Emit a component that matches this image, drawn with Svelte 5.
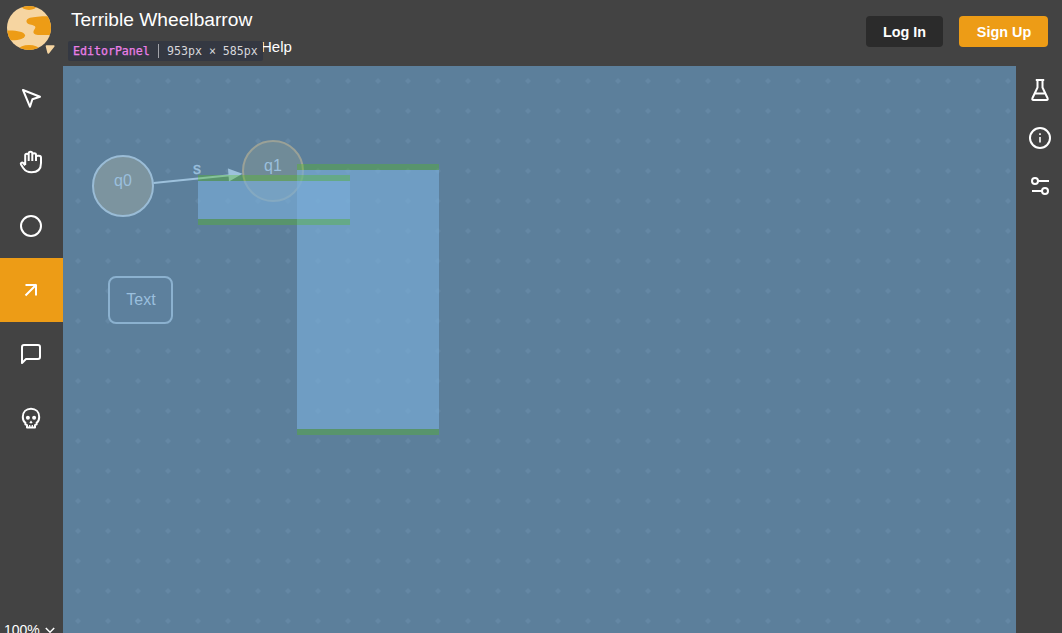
<script>
  const tools = ['cursor', 'hand', 'state', 'transition', 'comment', 'skull'];
  let active = $state('transition');
</script>

<div class="editor">
  <header>
    <svg class="logo" width="50" height="50" viewBox="0 0 50 50">
      <defs><clipPath id="moon"><circle cx="22" cy="22" r="22" /></clipPath></defs>
      <circle cx="22" cy="22" r="22" fill="#f6d5a1" />
      <g clip-path="url(#moon)" fill="#ed9c16">
        <ellipse cx="22" cy="0" rx="7.5" ry="3.900" />
        <path d="M46 10.300C36 10 28 10.500 23 11.800c-5 1.700-4.500 5.500 0 6.800 5 1 6.500 2 4.500 4.700-3 4 .5 5.700 6.500 5.700h12z" />
        <path d="M-1 24.500C8 24 18 25.500 18 29.200 18 33.200 10 34.800 1 34z" />
        <ellipse cx="22" cy="43" rx="10" ry="4" />
      </g>
      <path d="M39.300 39.300h7.600q1.200.2.600 1.100l-5.500 7q-1.200 1-1.600-.4l-1.700-6.700q0-1 .6-1z" fill="#f6d5a1" />
    </svg>
    <div class="heading">
      <h1>Terrible Wheelbarrow</h1>
      <nav><span>Help</span>
        <div class="tooltip"><b>EditorPanel</b><i></i><span>953px × 585px</span></div>
      </nav>
    </div>
    <div class="account">
      <button class="login">Log In</button>
      <button class="signup">Sign Up</button>
    </div>
  </header>
  <div class="workspace">
    <aside class="tools">
      {#each tools as tool}
        <button aria-label={tool} class:active={active === tool} onclick={() => (active = tool)}>
          <svg class="icon" width="24" height="24" viewBox="0 0 24 24">
            {#if tool === 'cursor'}
              <path d="M4 4l17 6.800-7.600 2.400L11 20.800z" />
            {:else if tool === 'hand'}
              <path d="M6.200 15V5.300q0-1.500 1.700-1.500t1.800 1.500V11M9.700 10V3.500Q9.700 1.800 11.500 1.800t1.800 1.700V11M13.300 10V4.800q0-1.500 1.800-1.500T17 4.800V11M17 10V7q0-1.300 1.800-1.300H20q2 0 2 2V13c0 6-3.500 9.300-9.500 9.300-4 0-6.500-1.600-8.300-4.300L2 14.500c-.8-1.600 1-2.600 2.200-1.500l2 2.300" />
            {:else if tool === 'state'}
              <circle cx="12" cy="12" r="10" />
            {:else if tool === 'transition'}
              <path d="M6.500 17.500L17.500 6.500M6.500 7H17v10.500" />
            {:else if tool === 'comment'}
              <path d="M3 21V5q0-2 2-2h14q2 0 2 2v10q0 2-2 2H7z" />
            {:else}
              <path d="M8 21.500v-2.400l-1.600-.7v-1.600C4.500 15.500 3.800 13.500 3.800 11c0-5 3.400-8.200 8.200-8.200s8.200 3.200 8.200 8.200c0 2.500-.7 4.500-2.600 5.800v1.600l-1.600.7v2.400z" />
              <path class="teeth" d="M10.700 19v2.500M13.300 19v2.500" />
              <circle class="solid" cx="8.900" cy="11.800" r="2" />
              <circle class="solid" cx="15.100" cy="11.800" r="2" />
              <path class="solid" d="M12 14.400l1.600 2.400-1.600.8-1.600-.8z" />
            {/if}
          </svg>
        </button>
      {/each}
      <div class="zoom">100%<svg width="10" height="7" viewBox="0 0 10 7"><path d="M.8 1L5 5.200 9.200 1" /></svg></div>
    </aside>
    <main>
      <svg class="graph" width="953" height="567" viewBox="63 66 953 567">
        <defs>
          <pattern id="grid" x="63" y="66" width="30" height="30" patternUnits="userSpaceOnUse">
            <path d="M15 12l3 3-3 3-3-3z" fill="#6487a4" />
          </pattern>
        </defs>
        <rect x="63" y="66" width="953" height="567" fill="url(#grid)" />
        <circle cx="123" cy="186" r="30" fill="#7c949f" stroke="#9abcd6" stroke-width="2" />
        <circle cx="273" cy="171" r="30" fill="#708b98" stroke="#9aa197" stroke-width="2" />
        <path d="M153.500 183L230 175.200" stroke="#9dc1dc" stroke-width="2" />
        <path d="M228 168.500L242.500 173.800 229 181.500z" fill="#9dc1dc" />
        <text x="123" y="186">q0</text>
        <text x="273" y="171">q1</text>
        <text class="label" x="197" y="174">s</text>
        <rect x="109" y="277" width="63" height="46" rx="7" fill="#5d809d" stroke="#8bb1cf" stroke-width="2" />
        <text x="141" y="305">Text</text>
        <g class="box"><path d="M297 170h142v259H297z" /><path class="edge" d="M297 164h142v6H297zM297 429h142v6H297z" /></g>
        <g class="box"><path d="M198 181h152v38H198z" /><path class="edge" d="M198 175h152v6H198zM198 219h152v6H198z" /></g>
      </svg>
    </main>
    <aside class="panels">
      <svg class="icon" width="24" height="24" viewBox="0 0 24 24"><path d="M7.800 2h8.400M9.500 2v7.500L4.500 20q-.8 2 1 2h13q1.800 0 1-2L14.500 9.500V2M7 15.500h10" /></svg>
      <svg class="icon" width="24" height="24" viewBox="0 0 24 24"><circle cx="12" cy="12" r="10" /><path class="fine" d="M12 11v5.500M12 7.200v1.800" /></svg>
      <svg class="icon" width="24" height="24" viewBox="0 0 24 24"><circle cx="7" cy="7" r="3" /><path d="M10 7H21M4 17h10" /><circle cx="17" cy="17" r="3" /></svg>
    </aside>
  </div>
</div>

<style>
  .editor { height: 633px; overflow: hidden; background: #434343; color: #fff; font-family: "Liberation Sans", Arial, sans-serif; display: flex; flex-direction: column; }
  header { height: 66px; flex: none; display: flex; box-sizing: border-box; padding: 6px 14px 0 7px; }
  .logo { flex: none; }
  .heading { margin-left: 14px; flex: 1; }
  h1 { margin: 2px 0 0; font-size: 19.200px; line-height: 23px; font-weight: 400; }
  nav { position: relative; margin-top: 6px; padding-left: 190px; font-size: 15px; line-height: 20px; }
  .tooltip { position: absolute; left: -3px; top: 4px; width: 195px; height: 20px; box-sizing: border-box; padding-left: 5px; background: #343842; border-radius: 2px; display: flex; align-items: center; font: 11.600px/20px "DejaVu Sans Mono", monospace; color: #d7d7db; white-space: nowrap; }
  .tooltip b { color: #eb7fe8; width: 77px; font-weight: 400; -webkit-text-stroke: .25px #eb7fe8; }
  .tooltip i { width: 1px; height: 14px; background: #a2a4aa; margin: 0 8px; }
  .account { display: flex; gap: 16px; margin-top: 10px; }
  .account button { height: 31px; padding: 1px 0 0; border: 0; border-radius: 4px; color: #fff; font: 700 14.400px/20px "Liberation Sans", Arial, sans-serif; }
  .account .login { width: 77px; background: #2b2b2b; }
  .account .signup { width: 89px; padding-left: 1px; background: #ed9c16; }
  .workspace { flex: 1; min-height: 0; display: flex; }
  .tools { width: 63px; flex: none; display: flex; flex-direction: column; }
  .tools button { flex: none; width: 63px; height: 64px; padding: 0 1px 0 0; border: 0; background: none; color: inherit; display: flex; justify-content: center; align-items: center; }
  .tools button.active { background: #ed9c16; }
  .icon { fill: none; stroke: #fff; stroke-width: 2; stroke-linejoin: round; }
  .icon .solid { fill: #fff; stroke: none; }
  .icon .teeth { stroke-width: 1.300; }
  .icon .fine { stroke-width: 1.600; }
  .zoom { flex: none; margin-top: 172px; padding-left: 4px; display: flex; align-items: center; gap: 5px; font-size: 14px; line-height: 16px; white-space: nowrap; }
  .zoom svg { fill: none; stroke: #fff; stroke-width: 1.500; }
  main { width: 953px; flex: none; background: #5c7f9b; }
  .graph { display: block; }
  .graph text { fill: #9abfdd; font-size: 16px; text-anchor: middle; }
  .graph .label { stroke: #9abfdd; stroke-width: .4px; }
  .box path { fill: rgba(121, 173, 216, .66); }
  .box .edge { fill: rgba(78, 199, 0, .3); }
  .panels { flex: 1; display: flex; flex-direction: column; align-items: center; gap: 24px; padding-top: 12px; padding-left: 2px; }
</style>
